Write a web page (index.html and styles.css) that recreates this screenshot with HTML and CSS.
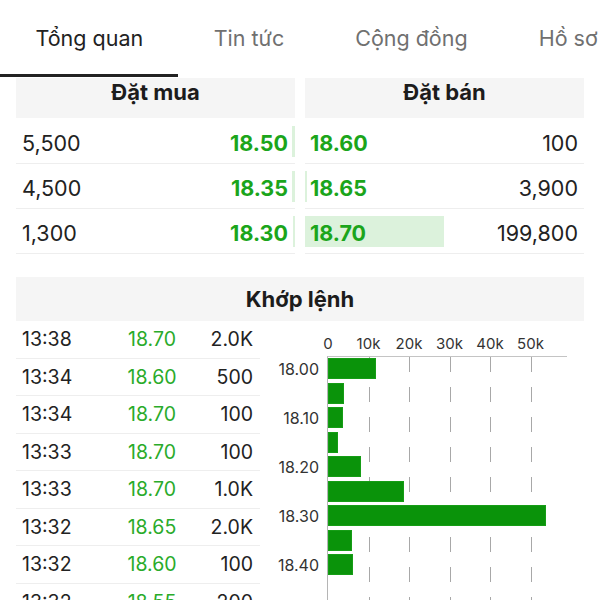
FILE: index.html
```html
<!DOCTYPE html>
<html lang="vi">
<head>
<meta charset="utf-8">
<link rel="stylesheet" href="styles.css">
</head>
<body>
<nav class="tabs">
  <div class="tab active">Tổng quan</div>
  <div class="tab">Tin tức</div>
  <div class="tab">Cộng đồng</div>
  <div class="tab">Hồ sơ</div>
</nav>

<section class="book">
  <div class="side buy">
    <div class="head">Đặt mua</div>
    <div class="row"><span class="vbar" style="width:3px"></span><span class="qty">5,500</span><span class="px">18.50</span></div>
    <div class="row"><span class="vbar" style="width:3px"></span><span class="qty">4,500</span><span class="px">18.35</span></div>
    <div class="row"><span class="vbar" style="width:2px"></span><span class="qty">1,300</span><span class="px">18.30</span></div>
  </div>
  <div class="side sell">
    <div class="head">Đặt bán</div>
    <div class="row"><span class="vbar" style="width:0px"></span><span class="px">18.60</span><span class="qty">100</span></div>
    <div class="row"><span class="vbar" style="width:2px"></span><span class="px">18.65</span><span class="qty">3,900</span></div>
    <div class="row"><span class="vbar" style="width:139px"></span><span class="px">18.70</span><span class="qty">199,800</span></div>
  </div>
</section>

<section class="match">
  <div class="head wide">Khớp lệnh</div>
  <div class="match-body">
    <div class="trades">
      <div class="trade"><span class="t">13:38</span><span class="p">18.70</span><span class="v">2.0K</span></div>
      <div class="trade"><span class="t">13:34</span><span class="p">18.60</span><span class="v">500</span></div>
      <div class="trade"><span class="t">13:34</span><span class="p">18.70</span><span class="v">100</span></div>
      <div class="trade"><span class="t">13:33</span><span class="p">18.70</span><span class="v">100</span></div>
      <div class="trade"><span class="t">13:33</span><span class="p">18.70</span><span class="v">1.0K</span></div>
      <div class="trade"><span class="t">13:32</span><span class="p">18.65</span><span class="v">2.0K</span></div>
      <div class="trade"><span class="t">13:32</span><span class="p">18.60</span><span class="v">100</span></div>
      <div class="trade"><span class="t">13:32</span><span class="p">18.55</span><span class="v">200</span></div>
    </div>
    <div class="chart">
      <div class="corner"></div>
      <div class="xaxis">
        <span>0</span><span>10k</span><span>20k</span><span>30k</span><span>40k</span><span>50k</span>
      </div>
      <div class="ylabels">
        <span>18.00</span><span></span><span>18.10</span><span></span><span>18.20</span><span></span><span>18.30</span><span></span><span>18.40</span>
      </div>
      <div class="plot">
        <i class="grid" style="left:40.5px"></i>
        <i class="grid" style="left:81px"></i>
        <i class="grid" style="left:121.5px"></i>
        <i class="grid" style="left:162px"></i>
        <i class="grid" style="left:202.5px"></i>
        <div class="bar" style="width:48px"></div>
        <div class="bar" style="width:16px"></div>
        <div class="bar" style="width:15px"></div>
        <div class="bar" style="width:10px"></div>
        <div class="bar" style="width:33px"></div>
        <div class="bar" style="width:76px"></div>
        <div class="bar" style="width:218px"></div>
        <div class="bar" style="width:24px"></div>
        <div class="bar" style="width:25px"></div>
      </div>
    </div>
  </div>
</section>
</body>
</html>
```

FILE: styles.css
```css
html, body {
  margin: 0;
  padding: 0;
  height: 600px;
  overflow: hidden;
  background: #fff;
}
body {
  font-family: Inter, "Liberation Sans", sans-serif;
  color: #222;
}

.tabs {
  display: flex;
  height: 77px;
  white-space: nowrap;
  overflow: hidden;
}
.tab {
  padding: 2px 35.5px 0;
  display: flex;
  align-items: center;
  font-size: 21.5px;
  color: #707070;
  border-bottom: 3px solid transparent;
  box-sizing: border-box;
  flex: none;
}
.tab:first-child { padding-right: 35px; }
.tab.active {
  color: #222;
  border-bottom-color: #222;
}

.book {
  display: grid;
  grid-template-columns: 1fr 1fr;
  gap: 10px;
  padding: 1px 16px 0;
}
.head {
  background: #f5f5f5;
  height: 40px;
  box-sizing: border-box;
  padding-top: 0;
  line-height: 28px;
  text-align: center;
  font-weight: 700;
  font-size: 22px;
  color: #1c1c1c;
}
.book .head { margin-bottom: 1px; }
.row {
  position: relative;
  display: flex;
  justify-content: space-between;
  align-items: center;
  height: 45px;
  box-sizing: border-box;
  padding-top: 3px;
  border-bottom: 1px solid #eeeeee;
  font-size: 21.5px;
}
.vbar {
  position: absolute;
  top: 7px;
  bottom: 6px;
  background: #dcf2dc;
}
.buy .vbar { right: 0; }
.sell .vbar { left: 0; }
.row span:not(.vbar) { position: relative; }
.buy .qty { padding-left: 6px; }
.buy .px { padding-right: 7px; }
.sell .px { padding-left: 5px; }
.sell .qty { padding-right: 6px; }
.px {
  color: #1ba51b;
  font-weight: 700;
}

.match {
  padding: 23px 16px 0;
}
.head.wide {
  height: 44px;
  line-height: 44px;
}
.match-body {
  display: grid;
  grid-template-columns: 244px 1fr;
}
.trade {
  display: grid;
  grid-template-columns: 84px 104px 1fr;
  align-items: center;
  height: 37.5px;
  box-sizing: border-box;
  border-bottom: 1px solid #eeeeee;
  font-size: 19.5px;
}
.trade .t { padding-left: 6px; }
.trade .p { text-align: center; color: #2aab2a; }
.trade .v { text-align: right; padding-right: 7px; }

.chart {
  display: grid;
  grid-template-columns: 68px 239px;
  grid-template-rows: 35px auto;
}
.xaxis {
  display: flex;
  margin-left: -20.25px;
  align-items: center;
  padding-top: 10px;
  box-sizing: border-box;
  font-size: 15px;
  color: #333;
}
.xaxis span {
  flex: none;
  width: 40.5px;
  text-align: center;
}
.ylabels {
  display: flex;
  flex-direction: column;
  gap: 3.5px;
  padding-top: 3px;
  padding-right: 9px;
  text-align: right;
  font-size: 16px;
  color: #333;
}
.ylabels span {
  height: 21px;
  line-height: 21px;
}
.plot {
  position: relative;
  height: 260px;
  border-top: 1px solid #c4c4c4;
  border-left: 1px solid #b5b5b5;
  margin-left: -1px;
  display: flex;
  flex-direction: column;
  gap: 3.5px;
  padding-top: 1px;
}
.grid {
  position: absolute;
  top: 0;
  bottom: 0;
  width: 1px;
  background: repeating-linear-gradient(to bottom, #a8a8a8 0 15px, transparent 15px 30px);
}
.bar {
  position: relative;
  height: 21px;
  flex: none;
  background: #0a930a;
  box-shadow: inset 0 0 0 1px #169d16;
}
```
